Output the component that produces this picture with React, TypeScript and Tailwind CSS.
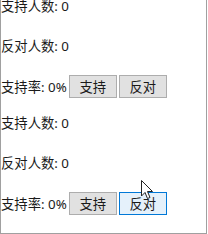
const groups = [
  { id: 1, hovered: false },
  { id: 2, hovered: true },
]

function Vote({ hovered }: { hovered: boolean }) {
  return (
    <div className="pb-[16px]">
      <p className="leading-[18px]">支持人数: 0</p>
      <p className="mt-[22px] leading-[18px]">反对人数: 0</p>
      <div className="mt-[20px] flex h-[23px] items-center">
        <span className="leading-[18px]">支持率: 0%</span>
        <button className="ml-[2px] h-[23px] w-[48px] border border-[#adadad] bg-[#e1e1e1] leading-[18px]">
          支持
        </button>
        <button
          className={
            hovered
              ? 'ml-[2px] h-[23px] w-[48px] border border-[#0078d7] bg-[#e5f1fb] leading-[18px]'
              : 'ml-[2px] h-[23px] w-[48px] border border-[#adadad] bg-[#e1e1e1] leading-[18px]'
          }
        >
          反对
        </button>
      </div>
    </div>
  )
}

export default function App() {
  return (
    <div className="relative h-[234px] w-[207px] overflow-hidden border-x border-b border-[#a0a0a0] bg-white text-[13.33px] text-[#1a1a1a] [font-family:'Noto_Sans','Noto_Sans_CJK_SC',sans-serif]">
      <div className="-mt-[3px]">
        {groups.map((g) => (
          <Vote key={g.id} hovered={g.hovered} />
        ))}
      </div>

      {/* mouse pointer */}
      <svg className="absolute left-[140px] top-[180px]" width="13" height="20" viewBox="0 0 13 20">
        <path d="M0.5 0.5 L0.5 16 L4 12.5 L6.5 18.5 L9 17.5 L6.5 11.5 L11.5 11.5 Z" fill="white" stroke="#222" strokeWidth="1" strokeLinejoin="round" />
      </svg>
    </div>
  )
}
